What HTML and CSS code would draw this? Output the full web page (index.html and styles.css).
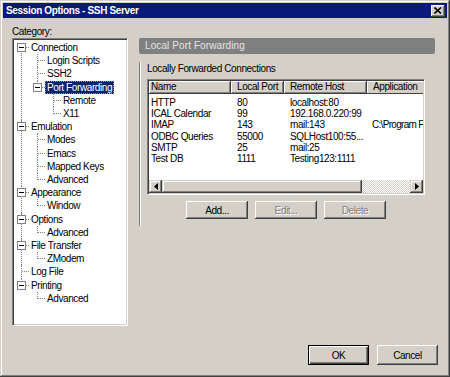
FILE: index.html
```html
<!DOCTYPE html>
<html lang="en">
<head>
    <meta charset="UTF-8">
    <title>Session Options - SSH Server</title>
    <link rel="stylesheet" href="styles.css">
</head>
<body>
<div class="window">
    <div class="titlebar">
        <span class="title">Session Options - SSH Server</span>
        <button class="close-btn" aria-label="Close">
            <svg width="8" height="7" viewBox="0 0 8 7"><path d="M0.5 0.5 L7 6.5 M7 0.5 L0.5 6.5" stroke="#000" stroke-width="1.6" fill="none"/></svg>
        </button>
    </div>
    <div class="content">
        <div class="left-col">
            <div class="cat-label">Category:</div>
            <div class="tree-box">
                <ul class="tree">
                    <li><span class="exp"></span><span class="label">Connection</span>
                        <ul>
                            <li><span class="label">Login Scripts</span></li>
                            <li><span class="label">SSH2</span></li>
                            <li><span class="exp"></span><span class="label selected">Port Forwarding</span>
                                <ul>
                                    <li><span class="label">Remote</span></li>
                                    <li><span class="label">X11</span></li>
                                </ul>
                            </li>
                        </ul>
                    </li>
                    <li><span class="exp"></span><span class="label">Emulation</span>
                        <ul>
                            <li><span class="label">Modes</span></li>
                            <li><span class="label">Emacs</span></li>
                            <li><span class="label">Mapped Keys</span></li>
                            <li><span class="label">Advanced</span></li>
                        </ul>
                    </li>
                    <li><span class="exp"></span><span class="label">Appearance</span>
                        <ul>
                            <li><span class="label">Window</span></li>
                        </ul>
                    </li>
                    <li><span class="exp"></span><span class="label">Options</span>
                        <ul>
                            <li><span class="label">Advanced</span></li>
                        </ul>
                    </li>
                    <li><span class="exp"></span><span class="label">File Transfer</span>
                        <ul>
                            <li><span class="label">ZModem</span></li>
                        </ul>
                    </li>
                    <li><span class="label">Log File</span></li>
                    <li><span class="exp"></span><span class="label">Printing</span>
                        <ul>
                            <li><span class="label">Advanced</span></li>
                        </ul>
                    </li>
                </ul>
            </div>
        </div>
        <div class="right-col">
            <div class="pane-title">Local Port Forwarding</div>
            <div class="group">
                <div class="group-title">Locally Forwarded Connections</div>
                <div class="listview">
                    <div class="lv-header">
                        <div class="lv-col first">Name</div>
                        <div class="lv-col">Local Port</div>
                        <div class="lv-col">Remote Host</div>
                        <div class="lv-col">Application</div>
                    </div>
                    <div class="lv-rows">
                        <div class="lv-row"><span class="first">HTTP</span><span>80</span><span>localhost:80</span><span></span></div>
                        <div class="lv-row"><span class="first">ICAL Calendar</span><span>99</span><span>192.168.0.220:99</span><span></span></div>
                        <div class="lv-row"><span class="first">IMAP</span><span>143</span><span>mail:143</span><span class="app">C:\Program F</span></div>
                        <div class="lv-row"><span class="first">ODBC Queries</span><span>55000</span><span>SQLHost100:55...</span><span></span></div>
                        <div class="lv-row"><span class="first">SMTP</span><span>25</span><span>mail:25</span><span></span></div>
                        <div class="lv-row"><span class="first">Test DB</span><span>1111</span><span>Testing123:1111</span><span></span></div>
                    </div>
                    <div class="hscroll">
                        <div class="sb-btn">
                            <svg width="4" height="7" viewBox="0 0 4 7"><polygon points="4,0 0,3.5 4,7" fill="#000"/></svg>
                        </div>
                        <div class="sb-thumb"></div>
                        <div class="sb-track"></div>
                        <div class="sb-btn">
                            <svg width="4" height="7" viewBox="0 0 4 7"><polygon points="0,0 4,3.5 0,7" fill="#000"/></svg>
                        </div>
                    </div>
                </div>
                <div class="list-buttons">
                    <button class="btn">Add...</button>
                    <button class="btn" disabled>Edit...</button>
                    <button class="btn" disabled>Delete</button>
                </div>
            </div>
        </div>
    </div>
    <div class="footer">
        <button class="btn big default">OK</button>
        <button class="btn big">Cancel</button>
    </div>
</div>
</body>
</html>
```

FILE: styles.css
```css
body {
    margin: 0;
    background-color: #d4d0c8;
    font-family: "Liberation Sans", Arial, sans-serif;
    font-size: 10px;
    letter-spacing: -0.4px;
    color: #000;
}

.window {
    width: 450px;
    height: 377px;
    box-sizing: border-box;
    padding: 3px;
    background-color: #d4d0c8;
    box-shadow: inset -1px -1px #404040, inset 1px 1px #d4d0c8, inset -2px -2px #808080, inset 2px 2px #fff;
    display: flex;
    flex-direction: column;
}

.titlebar {
    height: 15px;
    background-color: #0a1a7a;
    display: flex;
    align-items: center;
    padding: 0 2px 0 3px;
}

.title {
    color: #fff;
    font-weight: bold;
    letter-spacing: -0.35px;
}

.close-btn {
    margin-left: auto;
    width: 14px;
    height: 12px;
    padding: 0;
    border: none;
    background-color: #d4d0c8;
    box-shadow: inset -1px -1px #404040, inset 1px 1px #fff, inset -2px -2px #808080;
    display: flex;
    align-items: center;
    justify-content: center;
}

.content {
    flex: 1;
    display: flex;
    padding: 7px 9px 0 9px;
}

.left-col {
    width: 116px;
}

.cat-label {
    height: 13px;
    line-height: 13px;
}

.tree-box {
    height: 288px;
    box-sizing: border-box;
    background-color: #fff;
    border: 1px solid;
    border-color: #808080 #fff #fff #808080;
    box-shadow: inset 1px 1px #404040, inset -1px -1px #d4d0c8;
    padding-top: 2px;
    overflow: hidden;
}

.tree, .tree ul {
    list-style: none;
    margin: 0;
    padding: 0;
}

.tree ul {
    margin-left: 1px;
}

.tree {
    margin-left: 1px;
}

.tree li {
    position: relative;
    padding-left: 15px;
    line-height: 13.2px;
    white-space: nowrap;
}

.tree li::before {
    content: "";
    position: absolute;
    left: 7px;
    top: 0;
    bottom: 0;
    border-left: 1px dotted #808080;
}

.tree > li:first-child::before {
    top: 6px;
}

.tree li:last-child::before {
    bottom: auto;
    height: 7px;
}

.tree li::after {
    content: "";
    position: absolute;
    left: 8px;
    top: 6px;
    width: 7px;
    border-top: 1px dotted #808080;
}

.exp {
    position: absolute;
    left: 3px;
    top: 2px;
    width: 7px;
    height: 7px;
    border: 1px solid #808080;
    background-color: #fff;
    z-index: 1;
}

.exp::after {
    content: "";
    position: absolute;
    left: 1px;
    top: 3px;
    width: 5px;
    height: 1px;
    background-color: #000;
}

.label {
    display: inline-block;
    padding: 0 2px;
}

.label.selected {
    background-color: #0a246a;
    color: #fff;
    outline: 1px dotted #8890b8;
    outline-offset: -1px;
}

.right-col {
    width: 296px;
    margin-left: 11px;
    padding-top: 13px;
}

.pane-title {
    height: 16px;
    line-height: 16px;
    background-color: #808080;
    color: #e4e4e4;
    padding-left: 6px;
    border-radius: 2px;
    letter-spacing: 0.1px;
}

.group {
    margin-top: 14px;
    border-left: 1px solid #808080;
    box-shadow: inset 1px 0 #fff;
    padding: 0 0 7px 7px;
}

.group-title {
    margin-top: -6px;
    height: 13px;
    line-height: 13px;
    margin-bottom: 4px;
}

.listview {
    width: 278px;
    height: 116px;
    box-sizing: border-box;
    background-color: #fff;
    border: 1px solid;
    border-color: #808080 #fff #fff #808080;
    box-shadow: inset 1px 1px #404040, inset -1px -1px #d4d0c8;
    padding: 1px;
    display: flex;
    flex-direction: column;
}

.lv-header, .lv-row {
    display: grid;
    grid-template-columns: 82px 53px 83px 56px;
    overflow: hidden;
}

.lv-header {
    height: 13px;
}

.lv-col {
    background-color: #d4d0c8;
    box-sizing: border-box;
    line-height: 12px;
    padding-left: 6px;
    border-right: 1px solid #404040;
    border-bottom: 1px solid #404040;
    box-shadow: inset 1px 1px #fff, inset -1px -1px #808080;
    white-space: nowrap;
}

.lv-col:last-child {
    border-right: none;
    box-shadow: inset 1px 1px #fff;
}

.lv-header .first, .lv-row .first {
    padding-left: 2px;
}

.lv-rows {
    flex: 1;
    padding-top: 3px;
    overflow: hidden;
}

.lv-row span {
    line-height: 11.2px;
    padding-left: 6px;
    white-space: nowrap;
}

.lv-row .app {
    padding-left: 5px;
    letter-spacing: -0.7px;
}

.hscroll {
    height: 13px;
    display: flex;
}

.sb-btn {
    width: 13px;
    height: 13px;
    box-sizing: border-box;
    background-color: #d4d0c8;
    box-shadow: inset -1px -1px #404040, inset 1px 1px #d4d0c8, inset -2px -2px #808080, inset 2px 2px #fff;
    display: flex;
    align-items: center;
    justify-content: center;
}

.sb-thumb {
    width: 200px;
    background-color: #d4d0c8;
    box-shadow: inset -1px -1px #404040, inset 1px 1px #d4d0c8, inset -2px -2px #808080, inset 2px 2px #fff;
}

.sb-track {
    flex: 1;
    background: repeating-conic-gradient(#d4d0c8 0 25%, #fff 0 50%) 0 0 / 2px 2px;
}

.list-buttons {
    width: 278px;
    display: flex;
    justify-content: center;
    gap: 7px;
    margin-top: 6px;
}

.btn {
    width: 62px;
    height: 18px;
    box-sizing: border-box;
    padding: 0;
    border: none;
    background-color: #d4d0c8;
    box-shadow: inset -1px -1px #404040, inset 1px 1px #fff, inset -2px -2px #808080;
    font-family: "Liberation Sans", Arial, sans-serif;
    font-size: 10px;
    letter-spacing: -0.4px;
    color: #000;
}

.btn:disabled {
    color: #808080;
    text-shadow: 1px 1px #fff;
}

.footer {
    display: flex;
    justify-content: flex-end;
    gap: 8px;
    padding: 0 9px 9px 0;
}

.btn.big {
    width: 61px;
    height: 20px;
}

.btn.default {
    border: 1px solid #000;
    box-shadow: inset 1px 1px #fff, inset -1px -1px #404040, inset -2px -2px #808080;
}
```
